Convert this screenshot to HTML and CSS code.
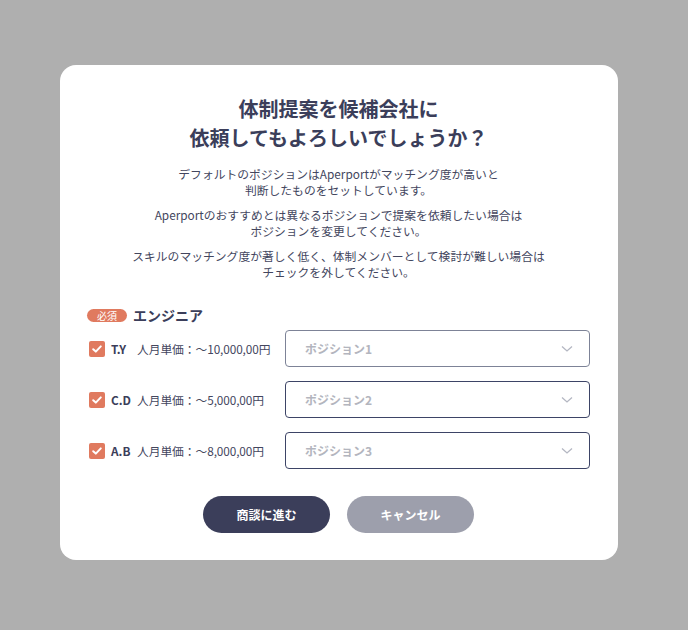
FILE: index.html
```html
<!DOCTYPE html>
<html lang="ja">

<head>
    <meta charset="UTF-8">
    <meta name="viewport" content="width=device-width, initial-scale=1.0">
    <title>体制提案</title>
    <link rel="stylesheet" href="styles.css">
</head>

<body>
    <div class="overlay">
        <div class="modal">
            <h1 class="modal-title">体制提案を候補会社に<br>依頼してもよろしいでしょうか？</h1>

            <div class="modal-text">
                <p>デフォルトのポジションはAperportがマッチング度が高いと<br>判断したものをセットしています。</p>
                <p>Aperportのおすすめとは異なるポジションで提案を依頼したい場合は<br>ポジションを変更してください。</p>
                <p>スキルのマッチング度が著しく低く、体制メンバーとして検討が難しい場合は<br>チェックを外してください。</p>
            </div>

            <div class="section-head">
                <span class="badge">必須</span>
                <span class="section-name">エンジニア</span>
            </div>

            <div class="rows">
                <div class="row">
                    <label class="member">
                        <span class="check">
                            <svg width="12" height="12" viewBox="0 0 12 12"><path d="M2.2 6.2 L4.8 8.6 L9.8 3.4" fill="none" stroke="#fff" stroke-width="2" stroke-linecap="round" stroke-linejoin="round"/></svg>
                        </span>
                        <span class="name">T.Y</span>
                        <span class="price">人月単価：〜10,000,00円</span>
                    </label>
                    <div class="select select-first">
                        <span class="placeholder">ポジション1</span>
                        <svg class="chevron" width="12" height="8" viewBox="0 0 12 8"><path d="M1 1.5 L6 6 L11 1.5" fill="none" stroke="#b4b7c2" stroke-width="1.3"/></svg>
                    </div>
                </div>
                <div class="row">
                    <label class="member">
                        <span class="check">
                            <svg width="12" height="12" viewBox="0 0 12 12"><path d="M2.2 6.2 L4.8 8.6 L9.8 3.4" fill="none" stroke="#fff" stroke-width="2" stroke-linecap="round" stroke-linejoin="round"/></svg>
                        </span>
                        <span class="name">C.D</span>
                        <span class="price">人月単価：〜5,000,00円</span>
                    </label>
                    <div class="select">
                        <span class="placeholder">ポジション2</span>
                        <svg class="chevron" width="12" height="8" viewBox="0 0 12 8"><path d="M1 1.5 L6 6 L11 1.5" fill="none" stroke="#b4b7c2" stroke-width="1.3"/></svg>
                    </div>
                </div>
                <div class="row">
                    <label class="member">
                        <span class="check">
                            <svg width="12" height="12" viewBox="0 0 12 12"><path d="M2.2 6.2 L4.8 8.6 L9.8 3.4" fill="none" stroke="#fff" stroke-width="2" stroke-linecap="round" stroke-linejoin="round"/></svg>
                        </span>
                        <span class="name">A.B</span>
                        <span class="price">人月単価：〜8,000,00円</span>
                    </label>
                    <div class="select">
                        <span class="placeholder">ポジション3</span>
                        <svg class="chevron" width="12" height="8" viewBox="0 0 12 8"><path d="M1 1.5 L6 6 L11 1.5" fill="none" stroke="#b4b7c2" stroke-width="1.3"/></svg>
                    </div>
                </div>
            </div>

            <div class="actions">
                <button class="btn btn-primary">商談に進む</button>
                <button class="btn btn-cancel">キャンセル</button>
            </div>
        </div>
    </div>
</body>

</html>
```

FILE: styles.css
```css
body {
    margin: 0;
    padding: 0;
    background: #afafaf;
    font-family: "Noto Sans CJK JP", "Noto Sans", sans-serif;
    color: #3b3e5a;
}

.overlay {
    height: 630px;
    padding-top: 65px;
    box-sizing: border-box;
}

.modal {
    width: 558px;
    margin-left: 60px;
    background: #fff;
    border-radius: 16px;
    padding: 29px 28px 27px 27px;
    box-sizing: border-box;
}

.modal-title {
    margin: 0;
    text-align: center;
    font-size: 20px;
    line-height: 29px;
    font-weight: 700;
    color: #3b3e5a;
}

.modal-text {
    margin-top: 14px;
    text-align: center;
    font-size: 11.8px;
    line-height: 16px;
    color: #43465e;
}

.modal-text p {
    margin: 0 0 9px;
}

.modal-text p:last-child {
    margin-bottom: 0;
}

.section-head {
    display: flex;
    align-items: center;
    gap: 6px;
    margin-top: 25px;
    height: 20px;
}

.badge {
    display: inline-block;
    width: 40px;
    height: 13px;
    line-height: 13px;
    border-radius: 7px;
    background: #e07a5f;
    color: #fff;
    font-size: 10px;
    text-align: center;
}

.section-name {
    font-size: 14px;
    font-weight: 700;
    color: #3b3e5a;
}

.rows {
    display: flex;
    flex-direction: column;
    gap: 14px;
    margin-top: 5px;
}

.row {
    display: flex;
    align-items: center;
    justify-content: space-between;
}

.member {
    display: flex;
    align-items: center;
    font-size: 11.8px;
    color: #43465e;
    padding-left: 2px;
}

.check {
    width: 16px;
    height: 16px;
    border-radius: 2px;
    background: #e07a5f;
    display: flex;
    align-items: center;
    justify-content: center;
    margin-right: 6px;
}

.name {
    font-weight: 700;
    min-width: 21px;
    margin-right: 5px;
    color: #3b3e5a;
}

.price {
    letter-spacing: -0.1px;
}

.select {
    width: 305px;
    height: 37px;
    box-sizing: border-box;
    border: 1px solid #3d4466;
    border-radius: 4px;
    display: flex;
    align-items: center;
    justify-content: space-between;
    padding: 0 16px 0 19px;
}

.select-first {
    border-color: #7d8397;
}

.placeholder {
    font-size: 12px;
    font-weight: 700;
    color: #b3b5be;
}

.actions {
    display: flex;
    justify-content: center;
    gap: 17px;
    margin-top: 27px;
}

.btn {
    width: 127px;
    height: 37px;
    border: none;
    border-radius: 19px;
    color: #fff;
    font-family: inherit;
    font-size: 12px;
    font-weight: 700;
    cursor: pointer;
}

.btn-primary {
    background: #3b3e5a;
}

.btn-cancel {
    background: #9d9fac;
}
```
